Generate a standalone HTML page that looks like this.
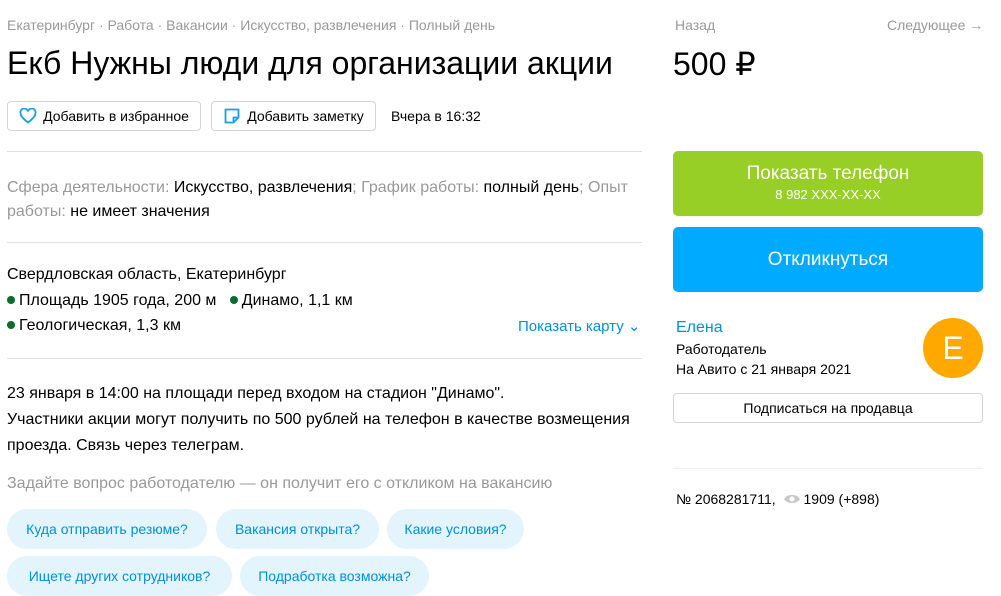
<!DOCTYPE html>
<html><head><meta charset="utf-8"><style>
*{margin:0;padding:0;box-sizing:border-box}
body{width:1001px;height:594px;overflow:hidden;background:#fff;font-family:"Liberation Sans",Arial,sans-serif;color:#000;position:relative}
.a{position:absolute;white-space:nowrap}
.g{color:#999}
.hr{position:absolute;height:1px;background:#e0e0e0}
.btn{position:absolute;border:1px solid #d4d4d4;border-radius:4px;font-size:14px;display:flex;align-items:center;justify-content:center}
.chip{position:absolute;height:40px;background:#e3f4fd;color:#0091d9;border-radius:20px;font-size:14px;line-height:40px;text-align:center}
.dot{display:inline-block;width:8px;height:8px;border-radius:50%;background:#0c6b2d;margin-right:4px;vertical-align:1px}
</style></head><body>
<div class="a g" style="left:7px;top:17px;font-size:14px">Екатеринбург · Работа · Вакансии · Искусство, развлечения · Полный день</div>
<div class="a" style="left:7px;top:45px;font-size:32px">Екб Нужны люди для организации акции</div>
<div class="btn" style="left:7px;top:101px;width:194px;height:30px"><svg width="18" height="16" viewBox="0 0 18 16" style="margin-right:6px"><path d="M9 14.5C4 10.5 1.5 8 1.5 5A3.5 3.5 0 0 1 9 3.5 3.5 3.5 0 0 1 16.5 5C16.5 8 14 10.5 9 14.5Z" fill="none" stroke="#1a9ee6" stroke-width="1.8"/></svg>Добавить в избранное</div>
<div class="btn" style="left:211px;top:101px;width:165px;height:30px"><svg width="18" height="18" viewBox="0 0 18 18" style="margin-right:6px"><path d="M2.5 2.5h13v8l-5 5h-8z M10.5 15.5v-5h5" fill="none" stroke="#1a9ee6" stroke-width="1.8" stroke-linejoin="round"/></svg>Добавить заметку</div>
<div class="a" style="left:391px;top:108px;font-size:14px">Вчера в 16:32</div>
<div class="hr" style="left:7px;top:151px;width:635px"></div>
<div class="a" style="left:7px;top:176px;font-size:16px;line-height:24px;white-space:normal;width:635px"><span class="g">Сфера деятельности:</span> Искусство, развлечения<span class="g">; График работы:</span> полный день<span class="g">; Опыт работы:</span> не имеет значения</div>
<div class="hr" style="left:7px;top:242px;width:635px"></div>
<div class="a" style="left:7px;top:266px;font-size:16px">Свердловская область, Екатеринбург</div>
<div class="a" style="left:7px;top:292px;font-size:16px"><span class="dot"></span>Площадь 1905 года, 200 м &nbsp;&nbsp;<span class="dot"></span>Динамо, 1,1 км</div>
<div class="a" style="left:7px;top:317px;font-size:16px"><span class="dot"></span>Геологическая, 1,3 км</div>
<div class="a" style="left:518px;top:317px;font-size:15px;color:#0091d9">Показать карту ⌄</div>
<div class="hr" style="left:7px;top:358px;width:635px"></div>
<div class="a" style="left:7px;top:381px;font-size:16px;line-height:26px">23 января в 14:00 на площади перед входом на стадион "Динамо".<br>Участники акции могут получить по 500 рублей на телефон в качестве возмещения<br>проезда. Связь через телеграм.</div>
<div class="a g" style="left:7px;top:475px;font-size:16px">Задайте вопрос работодателю — он получит его с откликом на вакансию</div>
<div class="chip" style="left:7px;top:509px;width:200px">Куда отправить резюме?</div>
<div class="chip" style="left:216px;top:509px;width:163px">Вакансия открыта?</div>
<div class="chip" style="left:387px;top:509px;width:137px">Какие условия?</div>
<div class="chip" style="left:7px;top:556px;width:225px">Ищете других сотрудников?</div>
<div class="chip" style="left:240px;top:556px;width:189px">Подработка возможна?</div>
<div class="a g" style="left:675px;top:17px;font-size:14px">Назад</div>
<div class="a g" style="left:887px;top:17px;font-size:14px">Следующее →</div>
<div class="a" style="left:673px;top:45px;font-size:32px">500 ₽</div>
<div class="a" style="left:673px;top:151px;width:310px;height:65px;background:#97cf26;border-radius:5px;color:#fff;text-align:center"><div style="font-size:19px;margin-top:12px">Показать телефон</div><div style="font-size:13px;margin-top:2px">8 982 XXX-XX-XX</div></div>
<div class="a" style="left:673px;top:227px;width:310px;height:65px;background:#00aaff;border-radius:5px;color:#fff;text-align:center;font-size:19px;line-height:65px">Откликнуться</div>
<div class="a" style="left:676px;top:319px;font-size:16px;color:#0091d9">Елена</div>
<div class="a" style="left:676px;top:341px;font-size:14px">Работодатель</div>
<div class="a" style="left:676px;top:361px;font-size:14px">На Авито с 21 января 2021</div>
<div class="a" style="left:923px;top:318px;width:60px;height:60px;border-radius:50%;background:#ffa800;color:#fff;font-size:32px;text-align:center;line-height:60px">E</div>
<div class="btn" style="left:673px;top:393px;width:310px;height:30px">Подписаться на продавца</div>
<div class="hr" style="left:673px;top:468px;width:310px;background:#eee"></div>
<div class="a" style="left:676px;top:491px;font-size:14px">№ 2068281711, <svg width="18" height="12" viewBox="0 0 18 12" style="vertical-align:-1px;margin:0 3px"><path d="M1 6C4 0.5 14 0.5 17 6 14 11.5 4 11.5 1 6Z" fill="#c8c8c8"/><circle cx="9" cy="6" r="2.6" fill="#fff"/></svg>1909 (+898)</div>
</body></html>
